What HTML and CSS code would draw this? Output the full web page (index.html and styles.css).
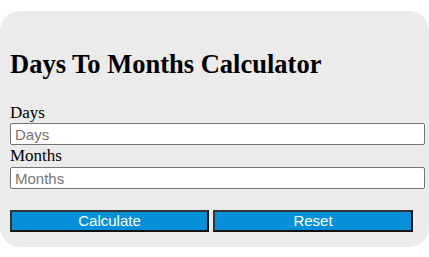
FILE: index.html
```html
<!DOCTYPE html>
<html>
<head>
<meta charset="utf-8">
<link rel="stylesheet" href="styles.css">
</head>
<body>
<div class="card">
  <h2 class="title">Days To Months Calculator</h2>
  <label class="label" for="days">Days</label>
  <input class="field" id="days" type="text" placeholder="Days">
  <label class="label" for="months">Months</label>
  <input class="field" id="months" type="text" placeholder="Months">
  <div class="actions">
    <button class="btn">Calculate</button>
    <button class="btn">Reset</button>
  </div>
</div>
</body>
</html>
```
FILE: styles.css
```css
html, body {
  margin: 0;
  padding: 0;
  background: #ffffff;
}
body {
  padding-top: 11px;
  font-family: "Liberation Serif", "Times New Roman", serif;
  overflow: hidden;
}
.card {
  background: #ebebeb;
  border-radius: 20px;
  padding: 40px 4px 15px 10px;
  display: flex;
  flex-direction: column;
  height: 181px;
}
.title {
  margin: 0;
  font-size: 26.5px;
  line-height: 27px;
  font-weight: bold;
  color: #000;
}
.label {
  display: block;
  margin-top: 26px;
  font-size: 17px;
  line-height: 18px;
  color: #000;
}
.field + .label {
  margin-top: 2px;
}
.field {
  display: block;
  box-sizing: border-box;
  width: 415px;
  height: 22px;
  margin: 1px 0 0 0;
  padding: 0 4px;
  border: 1px solid #767676;
  border-radius: 2px;
  background: #fff;
  font-family: "Liberation Sans", Arial, sans-serif;
  font-size: 15px;
  color: #000;
}
.field::placeholder {
  color: #757575;
}
#months {
  margin-top: 2px;
}
.actions {
  display: flex;
  gap: 4px;
  margin-top: 21px;
}
.btn {
  box-sizing: border-box;
  width: 199px;
  height: 22px;
  padding: 0;
  background: #0590d7;
  border: 2px solid #333;
  border-right-color: #111;
  border-bottom-color: #111;
  color: #fff;
  font-family: "Liberation Sans", Arial, sans-serif;
  font-size: 15px;
  line-height: 18px;
}
.btn + .btn {
  width: 200px;
}
```
